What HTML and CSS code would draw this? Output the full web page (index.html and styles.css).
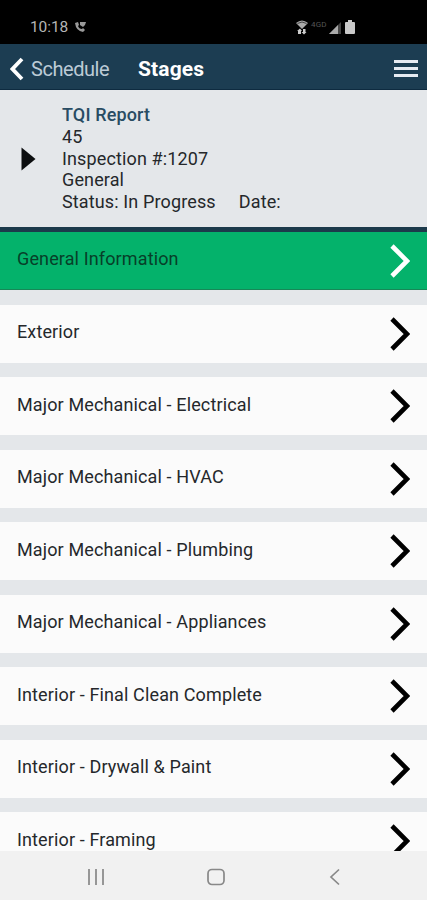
FILE: index.html
```html
<!DOCTYPE html>
<html lang="en">

<head>
    <meta charset="UTF-8" />
    <meta name="viewport" content="width=device-width, initial-scale=1.0" />
    <title>Stages</title>
    <link rel="stylesheet" href="styles.css">
</head>

<body>
    <div class="status-bar">
        <span class="time">10:18</span>
        <svg class="call-icon" width="13" height="12" viewBox="0 0 13 12">
            <path d="M1 2 L4 1 L5 4 L4 5 Q5 8 8 8 L9 7 L11 9 L9 11 Q2 10 1 2Z" />
            <path d="M6 1H12L11 4L9 6L6 4Z" />
        </svg>
        <div class="status-icons">
            <svg width="12" height="15" viewBox="0 0 12 15">
                <path d="M0 3 Q6 -2 12 3 L6 9Z" fill="#aaa" />
                <path d="M1.5 3.5 Q6 0.5 10.5 3.5" fill="none" stroke="#444" />
                <path d="M4 8.5 L6 11H5V14H2V11H1Z M8 14.5 L5.5 12H7V9H9.500V12H10.500Z" fill="#ccc" />
            </svg>
            <span class="network">4GD</span>
            <svg width="13" height="13" viewBox="0 0 13 13">
                <path d="M0 13L12 1V13Z" fill="#444" />
                <path d="M0 13L9 4V13Z" fill="#aaa" />
            </svg>
            <svg class="battery" width="10" height="14" viewBox="0 0 10 14">
                <path d="M3 0H7V2H9Q10 2 10 3V13Q10 14 9 14H1Q0 14 0 13V3Q0 2 1 2H3Z" fill="#c9c9c9" />
            </svg>
        </div>
    </div>

    <header class="nav-header">
        <button class="back-button" type="button">
            <svg width="14" height="24" viewBox="0 0 14 24">
                <path d="M12 2L2.500 12L12 22" fill="none" stroke="#fff" stroke-width="3.800" />
            </svg>
            <span>Schedule</span>
        </button>
        <h1>Stages</h1>
        <button class="menu-button" type="button" aria-label="Menu">
            <span></span>
            <span></span>
            <span></span>
        </button>
    </header>

    <section class="report-info">
        <svg class="expand-icon" width="15" height="24" viewBox="0 0 15 24">
            <path d="M0.500 0.500L14.500 12L0.500 23.500Z" fill="#0c0e10" />
        </svg>
        <div class="report-details">
            <h2>TQI Report</h2>
            <div>45</div>
            <div>Inspection #:1207</div>
            <div>General</div>
            <div class="status-line"><span>Status: In Progress</span><span>Date:</span></div>
        </div>
    </section>

    <main class="stage-list">
        <div class="stage active">
            <span>General Information</span>
            <svg class="arrow" viewBox="0 0 20 34"><path d="M2 2L17 17L2 32" /></svg>
        </div>
        <div class="stage">
            <span>Exterior</span>
            <svg class="arrow" viewBox="0 0 20 34"><path d="M2 2L17 17L2 32" /></svg>
        </div>
        <div class="stage">
            <span>Major Mechanical - Electrical</span>
            <svg class="arrow" viewBox="0 0 20 34"><path d="M2 2L17 17L2 32" /></svg>
        </div>
        <div class="stage">
            <span>Major Mechanical - HVAC</span>
            <svg class="arrow" viewBox="0 0 20 34"><path d="M2 2L17 17L2 32" /></svg>
        </div>
        <div class="stage">
            <span>Major Mechanical - Plumbing</span>
            <svg class="arrow" viewBox="0 0 20 34"><path d="M2 2L17 17L2 32" /></svg>
        </div>
        <div class="stage">
            <span>Major Mechanical - Appliances</span>
            <svg class="arrow" viewBox="0 0 20 34"><path d="M2 2L17 17L2 32" /></svg>
        </div>
        <div class="stage">
            <span>Interior - Final Clean Complete</span>
            <svg class="arrow" viewBox="0 0 20 34"><path d="M2 2L17 17L2 32" /></svg>
        </div>
        <div class="stage">
            <span>Interior - Drywall &amp; Paint</span>
            <svg class="arrow" viewBox="0 0 20 34"><path d="M2 2L17 17L2 32" /></svg>
        </div>
        <div class="stage">
            <span>Interior - Framing</span>
            <svg class="arrow" viewBox="0 0 20 34"><path d="M2 2L17 17L2 32" /></svg>
        </div>
    </main>

    <footer class="system-nav">
        <svg width="18" height="18" viewBox="0 0 18 18">
            <path d="M2 1V17M9 1V17M16 1V17" />
        </svg>
        <svg width="18" height="18" viewBox="0 0 18 18">
            <rect x="1" y="1.500" width="16" height="15" rx="4" />
        </svg>
        <svg width="18" height="18" viewBox="0 0 18 18">
            <path d="M13 1.500L5 9L13 16.500" />
        </svg>
    </footer>
</body>

</html>
```

FILE: styles.css
```css
* {
    box-sizing: border-box;
}

body {
    display: flex;
    flex-direction: column;
    height: 900px;
    margin: 0;
    overflow: hidden;
    font-family: Roboto, sans-serif;
    font-size: 18px;
    letter-spacing: 0.13px;
    color: #25282b;
    background-color: #e4e7ea;
}

svg {
    display: block;
    flex-shrink: 0;
}

button {
    background: none;
    border: none;
    padding: 0;
    font-family: inherit;
    cursor: pointer;
}

.status-bar {
    display: flex;
    align-items: center;
    height: 44px;
    padding: 10px 72px 0 30px;
    background-color: #000;
    color: #b5b5b5;
}

.time {
    width: 44px;
    font-size: 15.5px;
    letter-spacing: -0.1px;
}

.call-icon {
    fill: #999;
}

.status-icons {
    display: flex;
    align-items: center;
    margin-left: auto;
}

.network {
    width: 21px;
    padding-left: 3px;
    margin-top: -6px;
    font-size: 8px;
    color: #555;
}

.battery {
    margin-left: 3px;
}

.nav-header {
    display: flex;
    align-items: center;
    height: 46px;
    padding: 4px 9px 0 10px;
    background-color: #1c3d52;
    border-bottom: 1px solid #0e2b40;
}

.back-button {
    display: flex;
    align-items: center;
    gap: 7px;
    width: 128px;
    font-size: 20px;
    letter-spacing: -0.45px;
    color: #bccbd6;
}

h1 {
    margin: 0;
    font-size: 21px;
    font-weight: 700;
    color: #fff;
}

.menu-button {
    display: flex;
    flex-direction: column;
    gap: 4px;
    margin-left: auto;
}

.menu-button span {
    width: 24px;
    height: 3px;
    background-color: #e6ebf2;
}

.report-info {
    display: flex;
    align-items: center;
    height: 142px;
    padding-left: 21px;
    border-bottom: 5px solid #1c3a4b;
}

.report-details {
    padding-left: 26px;
    line-height: 21.8px;
}

h2 {
    margin: 0;
    font-size: 18px;
    font-weight: 500;
    color: #294c63;
}

.status-line {
    display: flex;
    gap: 23px;
}

.stage-list {
    display: flex;
    flex: 1;
    flex-direction: column;
    gap: 14.5px;
    min-height: 0;
    overflow: hidden;
}

.stage {
    display: flex;
    flex-shrink: 0;
    align-items: center;
    justify-content: space-between;
    height: 58px;
    padding: 0 17px;
    background-color: #fbfbfb;
}

.stage span {
    margin-top: -4px;
}

.arrow {
    width: 20px;
    height: 34px;
    fill: none;
    stroke: #000;
    stroke-width: 4.6;
}

.stage.active {
    background-color: #04b26b;
    border-bottom: 1px solid #178857;
    color: #073f29;
}

.active .arrow {
    stroke: #fff;
}

.system-nav {
    display: flex;
    align-items: center;
    justify-content: space-between;
    height: 49px;
    padding: 2px 83px 0 87px;
    background-color: #f1f1f1;
}

.system-nav svg {
    fill: none;
    stroke: #888;
    stroke-width: 1.7;
}
```
